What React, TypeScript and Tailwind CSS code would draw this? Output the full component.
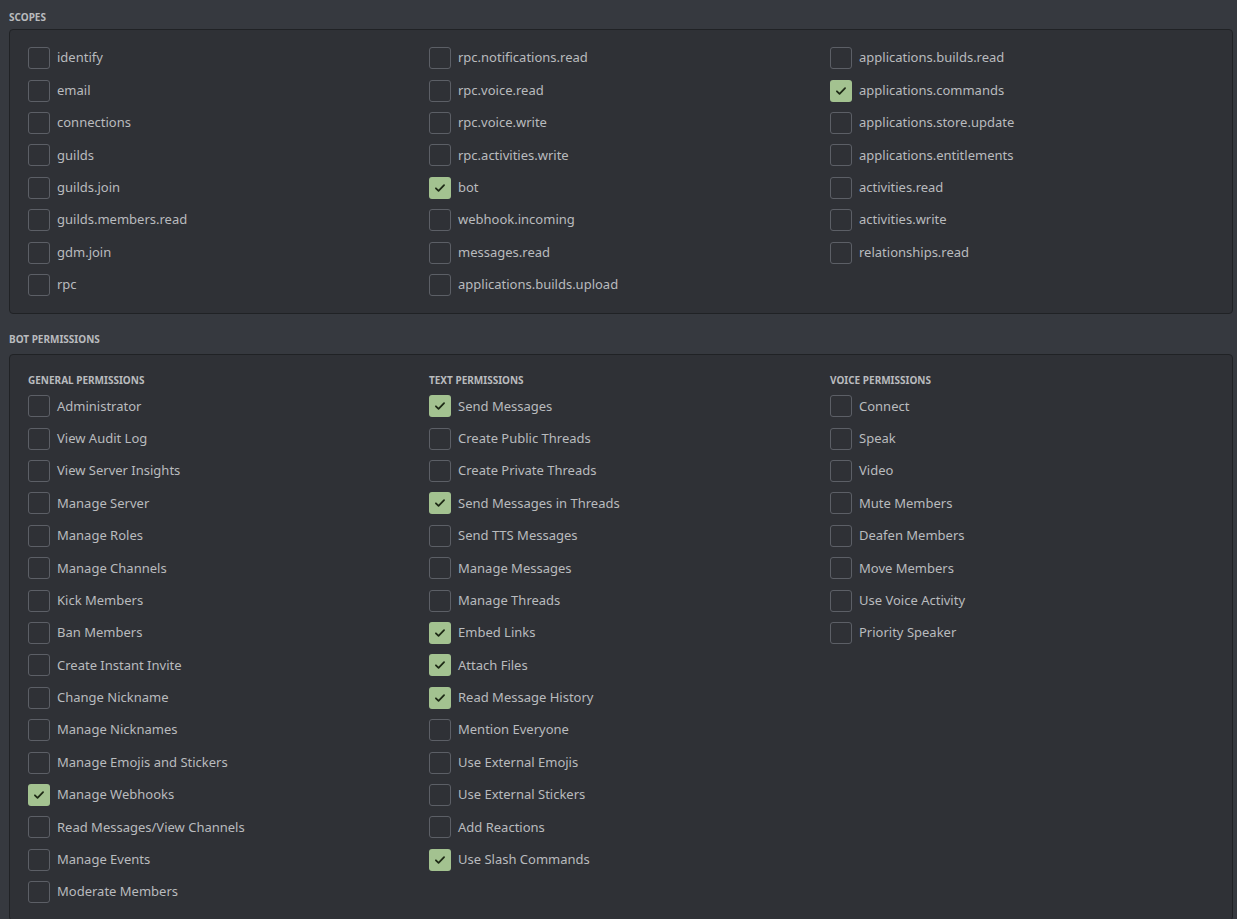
const scopes: [string, boolean][][] = [
  [["identify", false], ["email", false], ["connections", false], ["guilds", false], ["guilds.join", false], ["guilds.members.read", false], ["gdm.join", false], ["rpc", false]],
  [["rpc.notifications.read", false], ["rpc.voice.read", false], ["rpc.voice.write", false], ["rpc.activities.write", false], ["bot", true], ["webhook.incoming", false], ["messages.read", false], ["applications.builds.upload", false]],
  [["applications.builds.read", false], ["applications.commands", true], ["applications.store.update", false], ["applications.entitlements", false], ["activities.read", false], ["activities.write", false], ["relationships.read", false]],
]

const perms: { title: string; items: [string, boolean][] }[] = [
  {
    title: "GENERAL PERMISSIONS",
    items: [["Administrator", false], ["View Audit Log", false], ["View Server Insights", false], ["Manage Server", false], ["Manage Roles", false], ["Manage Channels", false], ["Kick Members", false], ["Ban Members", false], ["Create Instant Invite", false], ["Change Nickname", false], ["Manage Nicknames", false], ["Manage Emojis and Stickers", false], ["Manage Webhooks", true], ["Read Messages/View Channels", false], ["Manage Events", false], ["Moderate Members", false]],
  },
  {
    title: "TEXT PERMISSIONS",
    items: [["Send Messages", true], ["Create Public Threads", false], ["Create Private Threads", false], ["Send Messages in Threads", true], ["Send TTS Messages", false], ["Manage Messages", false], ["Manage Threads", false], ["Embed Links", true], ["Attach Files", true], ["Read Message History", true], ["Mention Everyone", false], ["Use External Emojis", false], ["Use External Stickers", false], ["Add Reactions", false], ["Use Slash Commands", true]],
  },
  {
    title: "VOICE PERMISSIONS",
    items: [["Connect", false], ["Speak", false], ["Video", false], ["Mute Members", false], ["Deafen Members", false], ["Move Members", false], ["Use Voice Activity", false], ["Priority Speaker", false]],
  },
]

function Row({ label, checked }: { label: string; checked: boolean }) {
  return (
    <div className="flex items-center h-[32.4px] gap-[7px]">
      {checked ? (
        <div className="w-[22px] h-[22px] rounded-[3px] bg-[#a3c290] flex items-center justify-center">
          <svg width="14" height="14" viewBox="0 0 24 24" fill="none" stroke="#1e2a16" strokeWidth="3" strokeLinecap="round" strokeLinejoin="round">
            <path d="M5 12.5l4.5 4.5L19 7" />
          </svg>
        </div>
      ) : (
        <div className="w-[22px] h-[22px] rounded-[3px] border border-[#5c5f66]" />
      )}
      <span className="text-[13px] text-[#b9bbbe]">{label}</span>
    </div>
  )
}

export default function App() {
  return (
    <div className="min-h-[919px] bg-[#36393f] pl-[9px] pr-[4px] pt-[6px] pb-4 font-['Open_Sans',sans-serif]">
      <div className="text-[10px] font-bold text-[#b9bbbe] h-[23px] flex items-center">SCOPES</div>
      <div className="bg-[#2f3136] border border-[#202225] rounded-[4px] pl-[18px] pt-[12px] pb-[12px] grid grid-cols-[401px_401px_1fr]">
        {scopes.map((col, i) => (
          <div key={i}>
            {col.map(([l, c]) => <Row key={l} label={l} checked={c} />)}
          </div>
        ))}
      </div>
      <div className="text-[10px] font-bold text-[#b9bbbe] h-[40px] flex items-center pt-[10px]">BOT PERMISSIONS</div>
      <div className="bg-[#2f3136] border border-[#202225] rounded-[4px] pl-[18px] pt-[15px] pb-[12px] grid grid-cols-[401px_401px_1fr]">
        {perms.map((g) => (
          <div key={g.title}>
            <div className="text-[10px] font-bold text-[#b9bbbe] h-[20px] flex items-center">{g.title}</div>
            {g.items.map(([l, c]) => <Row key={l} label={l} checked={c} />)}
          </div>
        ))}
      </div>
    </div>
  )
}
